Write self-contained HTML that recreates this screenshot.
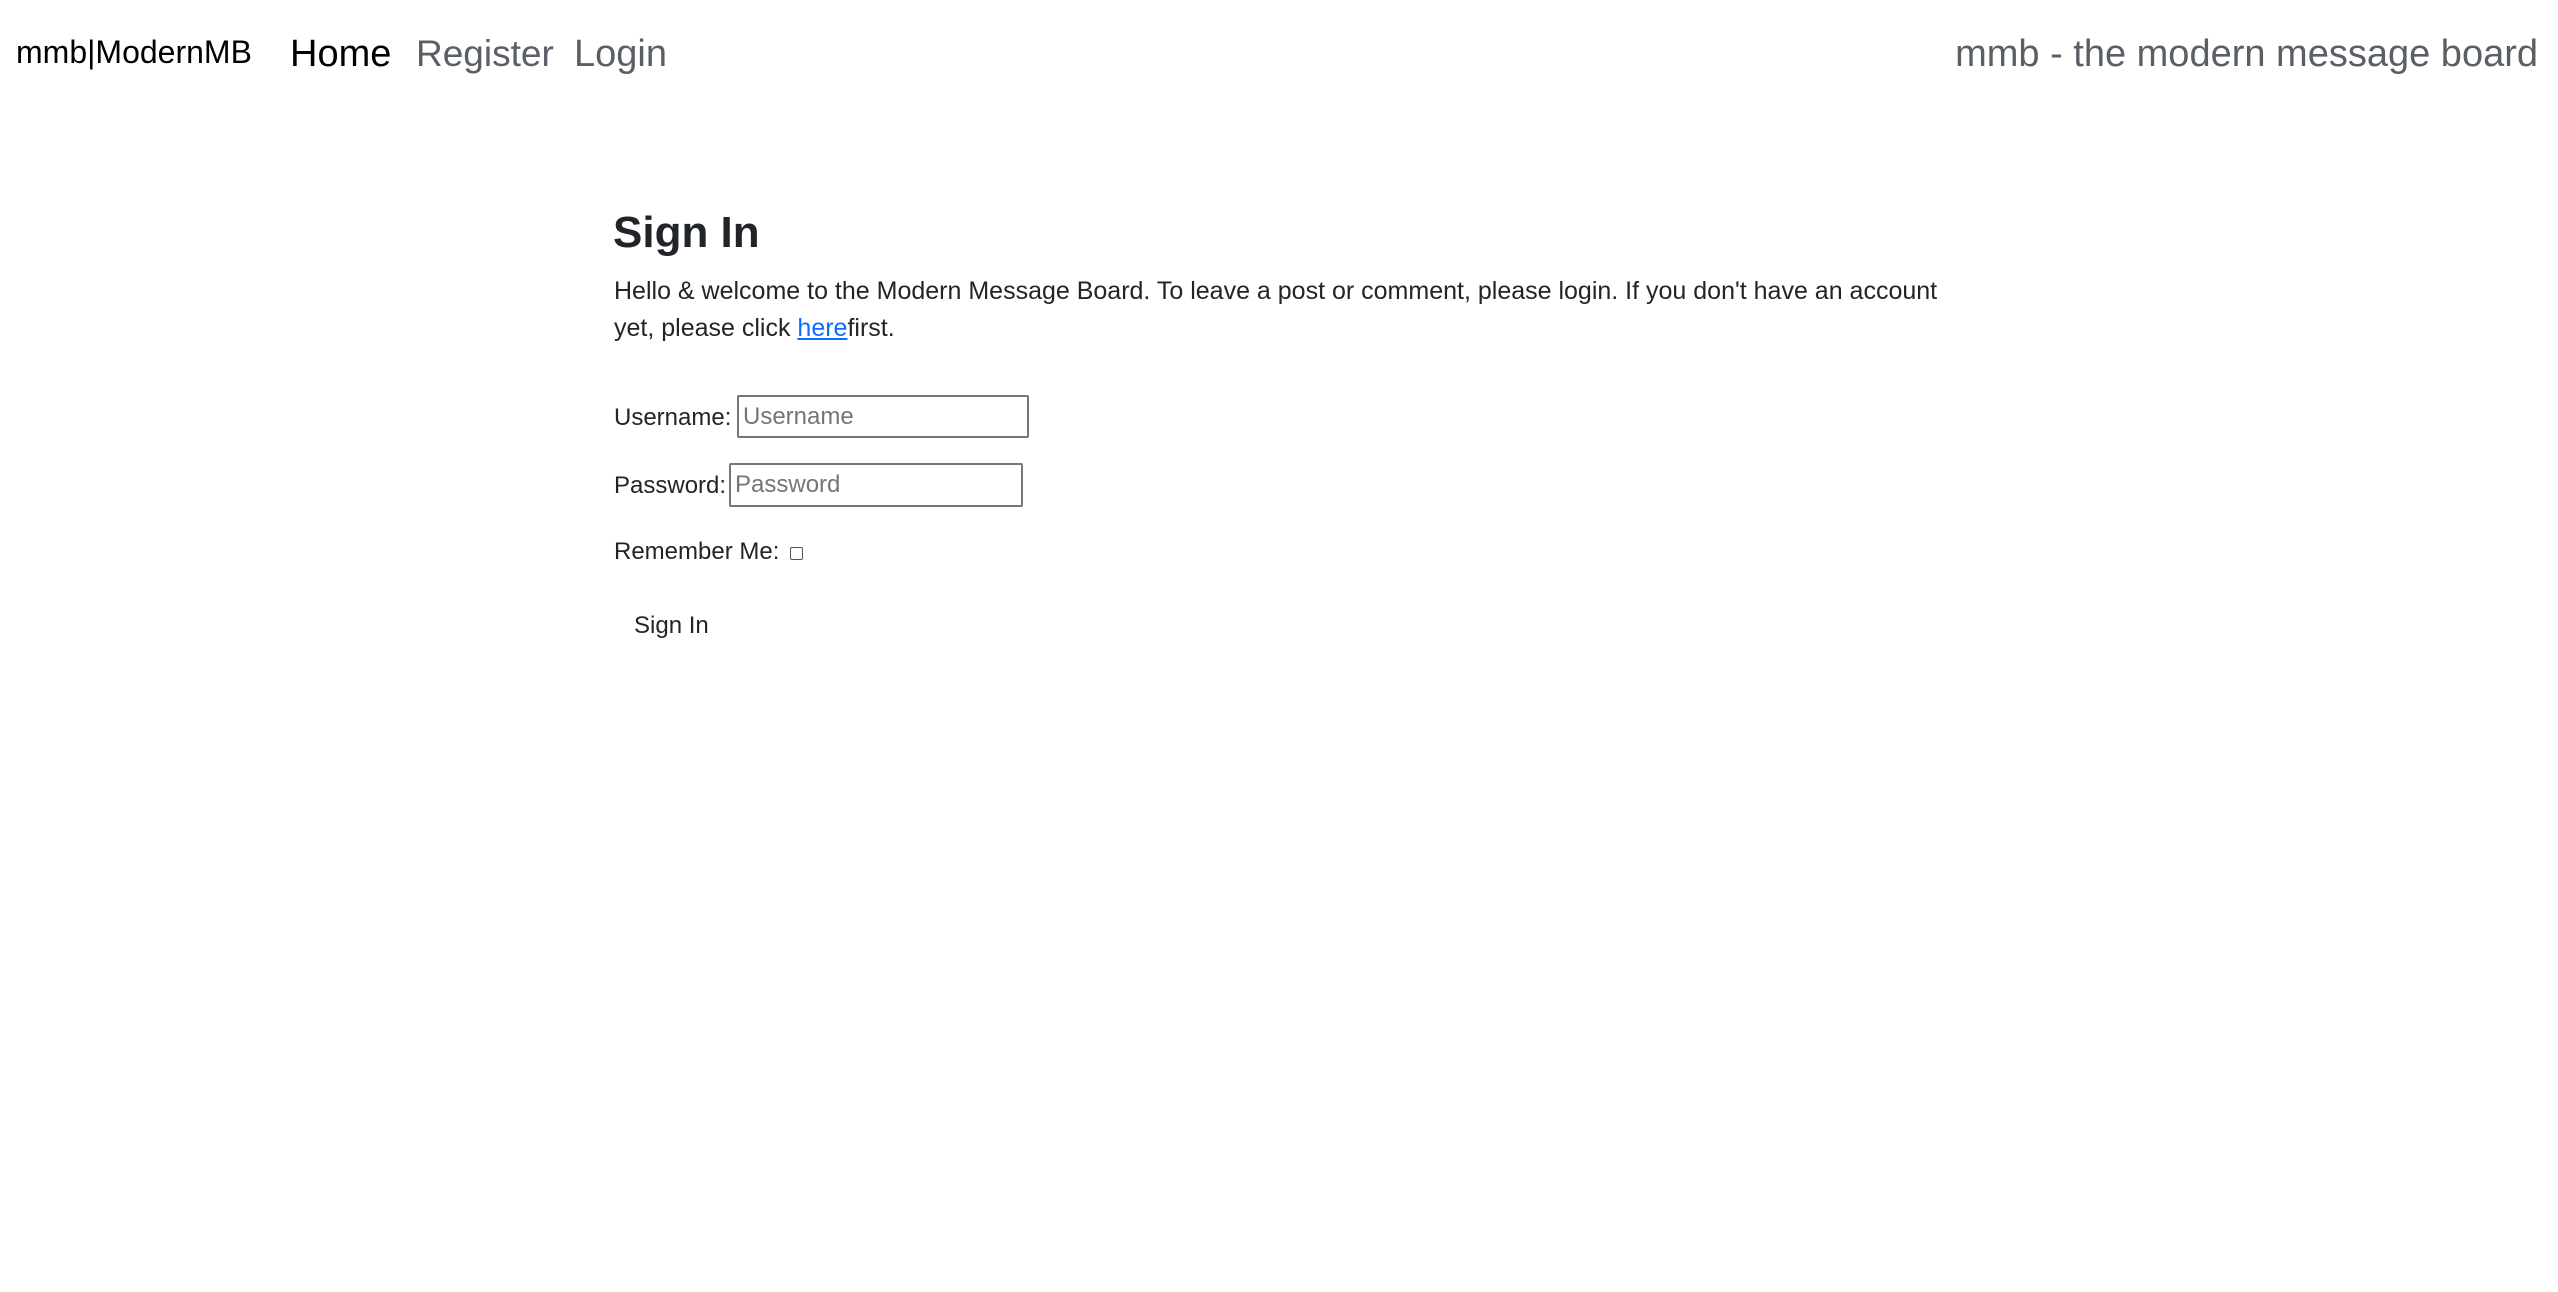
<!DOCTYPE html>
<html><head><meta charset="utf-8"><style>
html,body{margin:0;padding:0;background:#fff;width:2558px;height:1292px;overflow:hidden;font-family:"Liberation Sans",sans-serif;color:#212529}
.a{position:absolute;white-space:nowrap;line-height:1}
.nav{color:#5a5f66}
input.t{position:absolute;box-sizing:border-box;border:2px solid #767676;border-radius:2px;font-family:"Liberation Sans",sans-serif;font-size:24px;padding:0 4px;color:#212529;background:#fff}
input.t::placeholder{color:#757575}
a{color:#0d6efd}
</style></head><body>
<div class="a" style="left:16px;top:36px;font-size:32px;color:#000">mmb|ModernMB</div>
<div class="a" style="left:290px;top:35px;font-size:38px;color:#000">Home</div>
<div class="a nav" style="left:416px;top:35px;font-size:37px">Register</div>
<div class="a nav" style="left:574px;top:35px;font-size:38px">Login</div>
<div class="a nav" style="right:20px;top:35px;font-size:38px">mmb - the modern message board</div>

<div class="a" style="left:613px;top:211px;font-size:44px;font-weight:bold">Sign In</div>
<div class="a" style="left:614px;top:279px;font-size:25px">Hello &amp; welcome to the Modern Message Board. To leave a post or comment, please login. If you don't have an account</div>
<div class="a" style="left:614px;top:316px;font-size:25px">yet, please click <a href="#">here</a>first.</div>

<div class="a" style="left:614px;top:406px;font-size:24px">Username:</div>
<input class="t" style="left:737px;top:395px;width:292px;height:43px" placeholder="Username">
<div class="a" style="left:614px;top:474px;font-size:24px">Password:</div>
<input class="t" style="left:729px;top:463px;width:294px;height:44px" placeholder="Password">
<div class="a" style="left:614px;top:540px;font-size:24px">Remember Me:</div>
<div style="position:absolute;left:790px;top:547px;width:11px;height:11px;border:1.5px solid #555;border-radius:2px"></div>
<div class="a" style="left:634px;top:614px;font-size:24px">Sign In</div>
</body></html>
